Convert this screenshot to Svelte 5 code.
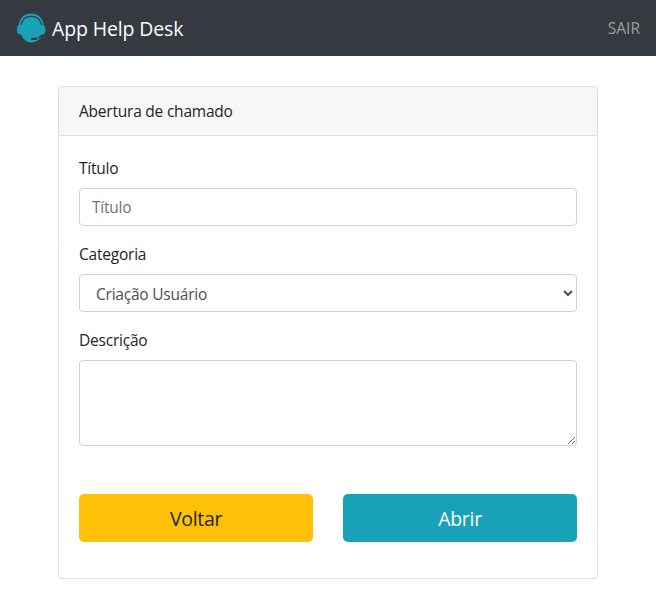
<script>
  let title = $state('');
  let category = $state('Criação Usuário');
  let description = $state('');
  const categories = ['Criação Usuário', 'Impressora', 'Hardware', 'Software', 'Rede'];
</script>

<nav class="navbar">
  <a class="brand" href="#home">
    <svg width="30" height="30" viewBox="0 0 30 30" aria-hidden="true">
      <path class="teal" d="M15.200.5C8.400.5 3.600 5.100 2.900 11.700 1.500 12.800.9 14.600.9 17s1 4 3 4.600l1.500.2C7.200 26.500 10.700 29.500 15.200 29.500c3.500 0 6.500-1.200 8.300-3.700 1.200-1.100 2-2.500 2.500-4.100l1.200-.2c1.600-.7 2.300-2.500 2.300-4.500 0-2.200-.6-4-1.900-5.100C26.900 5.100 22 .5 15.200.5z" />
      <path class="line" d="M5.100 11.300C6.200 6.600 10 3.400 15.200 3.400s9 3.200 10.100 7.900" stroke-width="1.300" />
      <path class="line" d="M25.300 22.300c-1.100 1.900-2.800 3.200-5.300 3.600" stroke-width="1.200" />
      <rect class="dark" x="15" y="24.700" width="6" height="2.400" rx="1.200" />
    </svg>
    <span>App Help Desk</span>
  </a>
  <a class="logout" href="#sair">SAIR</a>
</nav>

<main>
  <section class="card">
    <header>Abertura de chamado</header>
    <form onsubmit={(e) => e.preventDefault()}>
      <div class="group">
        <label for="title">Título</label>
        <input id="title" class="control" type="text" placeholder="Título" bind:value={title} />
      </div>
      <div class="group">
        <label for="category">Categoria</label>
        <select id="category" class="control" bind:value={category}>
          {#each categories as item}
            <option>{item}</option>
          {/each}
        </select>
      </div>
      <div class="group">
        <label for="description">Descrição</label>
        <textarea id="description" class="control" rows="3" bind:value={description}></textarea>
      </div>
      <div class="actions">
        <button class="warning" type="button">Voltar</button>
        <button class="info" type="submit">Abrir</button>
      </div>
    </form>
  </section>
</main>

<style>
  :global(body) {
    margin: 0;
    background: #fff;
    color: #212529;
    font: 15.5px/24px "Open Sans", "Noto Sans", sans-serif;
    letter-spacing: -.22px;
  }
  * { box-sizing: border-box; }
  a { text-decoration: none; }
  .navbar {
    display: flex;
    align-items: center;
    justify-content: space-between;
    height: 56px;
    padding: 0 16px;
    background: #343a40;
  }
  .brand {
    display: flex;
    align-items: center;
    gap: 6px;
    color: #fff;
    font-size: 19.5px;
    letter-spacing: -.14px;
    line-height: 30px;
  }
  .brand span { padding-top: 1px; }
  .teal { fill: #17a2b8; }
  .line { fill: none; stroke: #343a40; stroke-linecap: round; }
  .dark { fill: #343a40; }
  .logout { color: rgba(255, 255, 255, .5); letter-spacing: 0; }
  main { width: 540px; margin: 30px auto 0; }
  .card { border: 1px solid #dfdfdf; border-radius: 4px; }
  header {
    padding: 12px 20px;
    border-bottom: 1px solid #dfdfdf;
    border-radius: 3px 3px 0 0;
    background: #f7f7f7;
  }
  form { padding: 20px 20px 36px; }
  .group { display: flex; flex-direction: column; gap: 8px; margin-bottom: 16px; }
  .control {
    display: block;
    width: 100%;
    height: 38px;
    margin: 0;
    padding: 6px 12px;
    border: 1px solid #ced4da;
    border-radius: 4px;
    background: #fff;
    color: #495057;
    font: inherit;
    letter-spacing: inherit;
    outline: 0;
  }
  .control::placeholder { color: #6c757d; opacity: 1; }
  select.control { padding: 7px 12px 5px; }
  textarea.control { height: 86px; resize: vertical; }
  .actions { display: grid; grid-template-columns: 1fr 1fr; gap: 30px; margin-top: 48px; }
  button {
    height: 48px;
    padding: 2px 16px 0;
    border: 0;
    border-radius: 5px;
    font: 19.5px/30px "Open Sans", "Noto Sans", sans-serif;
    letter-spacing: -.3px;
  }
  .warning { background: #ffc107; color: #212529; }
  .info { background: #17a2b8; color: #fff; }
</style>
